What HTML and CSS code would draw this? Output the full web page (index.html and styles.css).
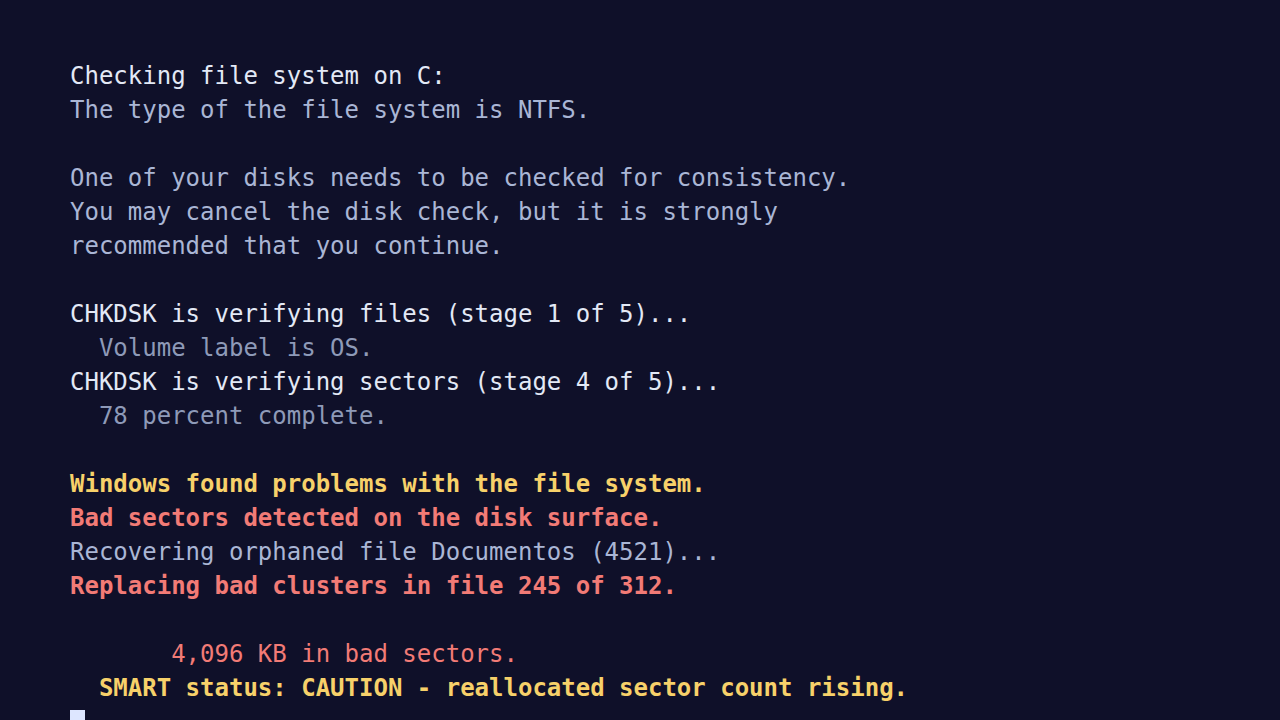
FILE: index.html
```html
<!DOCTYPE html>
<html>
<head>
<meta charset="utf-8">
<link rel="stylesheet" href="styles.css">
</head>
<body>
<main class="term">
<div class="ln hi">Checking file system on C:</div>
<div class="ln">The type of the file system is NTFS.</div>
<div class="ln"> </div>
<div class="ln">One of your disks needs to be checked for consistency.</div>
<div class="ln">You may cancel the disk check, but it is strongly</div>
<div class="ln">recommended that you continue.</div>
<div class="ln"> </div>
<div class="ln hi">CHKDSK is verifying files (stage 1 of 5)...</div>
<div class="ln lo">  Volume label is OS.</div>
<div class="ln hi">CHKDSK is verifying sectors (stage 4 of 5)...</div>
<div class="ln lo">  78 percent complete.</div>
<div class="ln"> </div>
<div class="ln warn">Windows found problems with the file system.</div>
<div class="ln err">Bad sectors detected on the disk surface.</div>
<div class="ln">Recovering orphaned file Documentos (4521)...</div>
<div class="ln err">Replacing bad clusters in file 245 of 312.</div>
<div class="ln"> </div>
<div class="ln err-soft">       4,096 KB in bad sectors.</div>
<div class="ln warn">  SMART status: CAUTION - reallocated sector count rising.</div>
<div class="ln"><span class="cursor"></span></div>
</main>
</body>
</html>
```
FILE: styles.css
```css
html, body {
  margin: 0;
  padding: 0;
  background: #0f1029;
  height: 100%;
  overflow: hidden;
}
.term {
  padding: 59px 0 0 70px;
  font-family: "DejaVu Sans Mono", monospace;
  font-size: 24px;
  line-height: 34px;
  color: #aab6d5;
}
.ln {
  white-space: pre;
  height: 34px;
}
.hi { color: #e3e9f6; }
.lo { color: #8e9ab8; }
.warn { color: #f7d16a; font-weight: bold; }
.err { color: #f27b76; font-weight: bold; }
.err-soft { color: #f27b76; }
.cursor {
  display: block;
  width: 15px;
  height: 24px;
  margin-top: 5px;
  background: #dde6ff;
}
```
